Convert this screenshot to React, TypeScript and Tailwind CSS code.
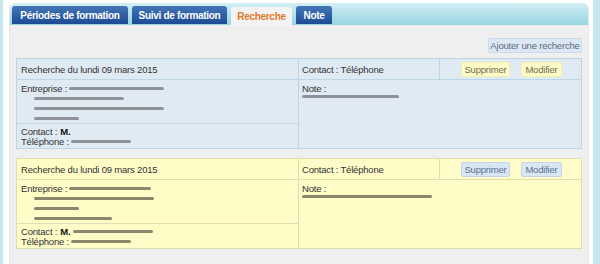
import { ReactNode } from "react";
import { clsx } from "clsx";

const tabs = [
  { label: "Périodes de formation", w: "w-[116px]" },
  { label: "Suivi de formation", w: "w-[95px]" },
  { label: "Recherche", w: "w-[61px]", active: true },
  { label: "Note", w: "w-[36px]" },
];

/** Blurred placeholder for masked personal data */
function Blur({ w, dark }: { w: string; dark?: boolean }) {
  return (
    <span
      className={clsx(
        "inline-block h-[3px] align-middle blur-[0.6px] rounded-full",
        dark ? "bg-[#8a876a]" : "bg-[#8d9299]",
        w
      )}
    />
  );
}

function SmallButton({ children, variant, w }: { children: ReactNode; variant: "yellow" | "blue"; w: string }) {
  return (
    <button
      className={clsx(
        "h-[15px] rounded-[2px] border text-[9.5px] leading-[13px] tracking-[-0.2px] whitespace-nowrap",
        w,
        variant === "yellow"
          ? "bg-[#fffbc4] border-[#f3efb4] text-[#6e6c5a]"
          : "bg-[#d9e7f5] border-[#c3d5e8] text-[#5a7190]"
      )}
    >
      {children}
    </button>
  );
}

function SearchCard({ tone, lines, contactBlur, noteW }: {
  tone: "blue" | "yellow";
  lines: string[];
  contactBlur?: boolean;
  noteW: string;
}) {
  const blue = tone === "blue";
  const border = blue ? "border-[#bcd6e4]" : "border-[#dcdfae]";
  return (
    <div
      className={clsx(
        "grid grid-cols-[282px_141px_1fr] border text-[9.5px] tracking-[-0.2px] leading-[9px] text-[#333]",
        blue ? "bg-[#e0eaf2]" : "bg-[#fffcc8]",
        border
      )}
    >
      <div className={clsx("h-[21px] flex items-center pl-[4px] pt-[1px] border-b border-r", border)}>
        Recherche du lundi 09 mars 2015
      </div>
      <div className={clsx("h-[21px] flex items-center pl-[3px] pt-[1px] border-b border-r", border)}>
        Contact : Téléphone
      </div>
      <div className={clsx("h-[21px] flex items-center gap-[11px] border-b pl-[21px]", border)}>
        <SmallButton variant={blue ? "yellow" : "blue"} w="w-[49px]">Supprimer</SmallButton>
        <SmallButton variant={blue ? "yellow" : "blue"} w="w-[41px]">Modifier</SmallButton>
      </div>
      <div className={clsx("border-r flex flex-col", border)}>
        <div className={clsx("h-[44px] border-b pl-[4px] pt-[4px] flex flex-col gap-[1px]", border)}>
          <div className="h-[9px] flex items-center gap-[2px]">
            Entreprise : <Blur w={lines[0]} dark={!blue} />
          </div>
          {lines.slice(1).map((l, i) => (
            <div key={i} className="h-[9px] flex items-center pl-[13px]">
              <Blur w={l} dark={!blue} />
            </div>
          ))}
        </div>
        <div className="h-[24px] pl-[4px] pt-[2px] flex flex-col">
          <div className="h-[10px] flex items-center gap-[3px]">
            Contact : <b className="text-[#111]">M.</b>
            {contactBlur && <Blur w="w-[80px]" dark={!blue} />}
          </div>
          <div className="h-[10px] flex items-center gap-[2px]">
            Téléphone : <Blur w="w-[60px]" dark={!blue} />
          </div>
        </div>
      </div>
      <div className="col-span-2 pl-[3px] pt-[4px]">
        <div className="h-[9px] flex items-center">Note :</div>
        <div className="h-[6px] flex items-center">
          <Blur w={noteW} dark={!blue} />
        </div>
      </div>
    </div>
  );
}

export default function App() {
  return (
    <div className="w-[600px] h-[264px] bg-white flex overflow-hidden font-['Liberation_Sans',Arial,sans-serif]">
      <div className="w-[3px] bg-[#c3e8ee]" />
      <div className="ml-[6px] mt-[3px] w-[580px] flex flex-col bg-[#efefef] rounded-t-[6px] border-l border-r border-[#e6e6e6]">
        <div className="h-[22px] rounded-t-[6px] bg-gradient-to-b from-[#d2eff4] to-[#95d5e0] flex items-end gap-[4px] pl-[2px]">
          {tabs.map((t) => (
            <div
              key={t.label}
              className={clsx(
                "flex items-center justify-center rounded-t-[3px] text-[10px] font-bold tracking-[-0.3px]",
                t.w,
                t.active
                  ? "h-[19px] bg-[#f3f3f3] text-[#e07a2a] mb-[-1px]"
                  : "h-[18px] mb-[1px] bg-gradient-to-b from-[#4476b8] to-[#1c4b94] text-white"
              )}
            >
              {t.label}
            </div>
          ))}
        </div>
        <div className="flex flex-col pl-[6px] pr-[6px] pt-[13px]">
          <div className="flex justify-end">
            <button className="h-[15px] w-[94px] rounded-[2px] bg-[#dce8f4] border border-[#cbdaea] text-[9.5px] leading-[13px] tracking-[-0.2px] whitespace-nowrap text-[#5b6b7e]">
              Ajouter une recherche
            </button>
          </div>
          <div className="mt-[5px]">
            <SearchCard
              tone="blue"
              lines={["w-[95px]", "w-[90px]", "w-[130px]", "w-[45px]"]}
              noteW="w-[97px]"
            />
          </div>
          <div className="mt-[9px]">
            <SearchCard
              tone="yellow"
              lines={["w-[82px]", "w-[120px]", "w-[45px]", "w-[78px]"]}
              contactBlur
              noteW="w-[130px]"
            />
          </div>
        </div>
      </div>
      <div className="ml-[4px] w-[7px] bg-[#c3e8ee]" />
    </div>
  );
}
